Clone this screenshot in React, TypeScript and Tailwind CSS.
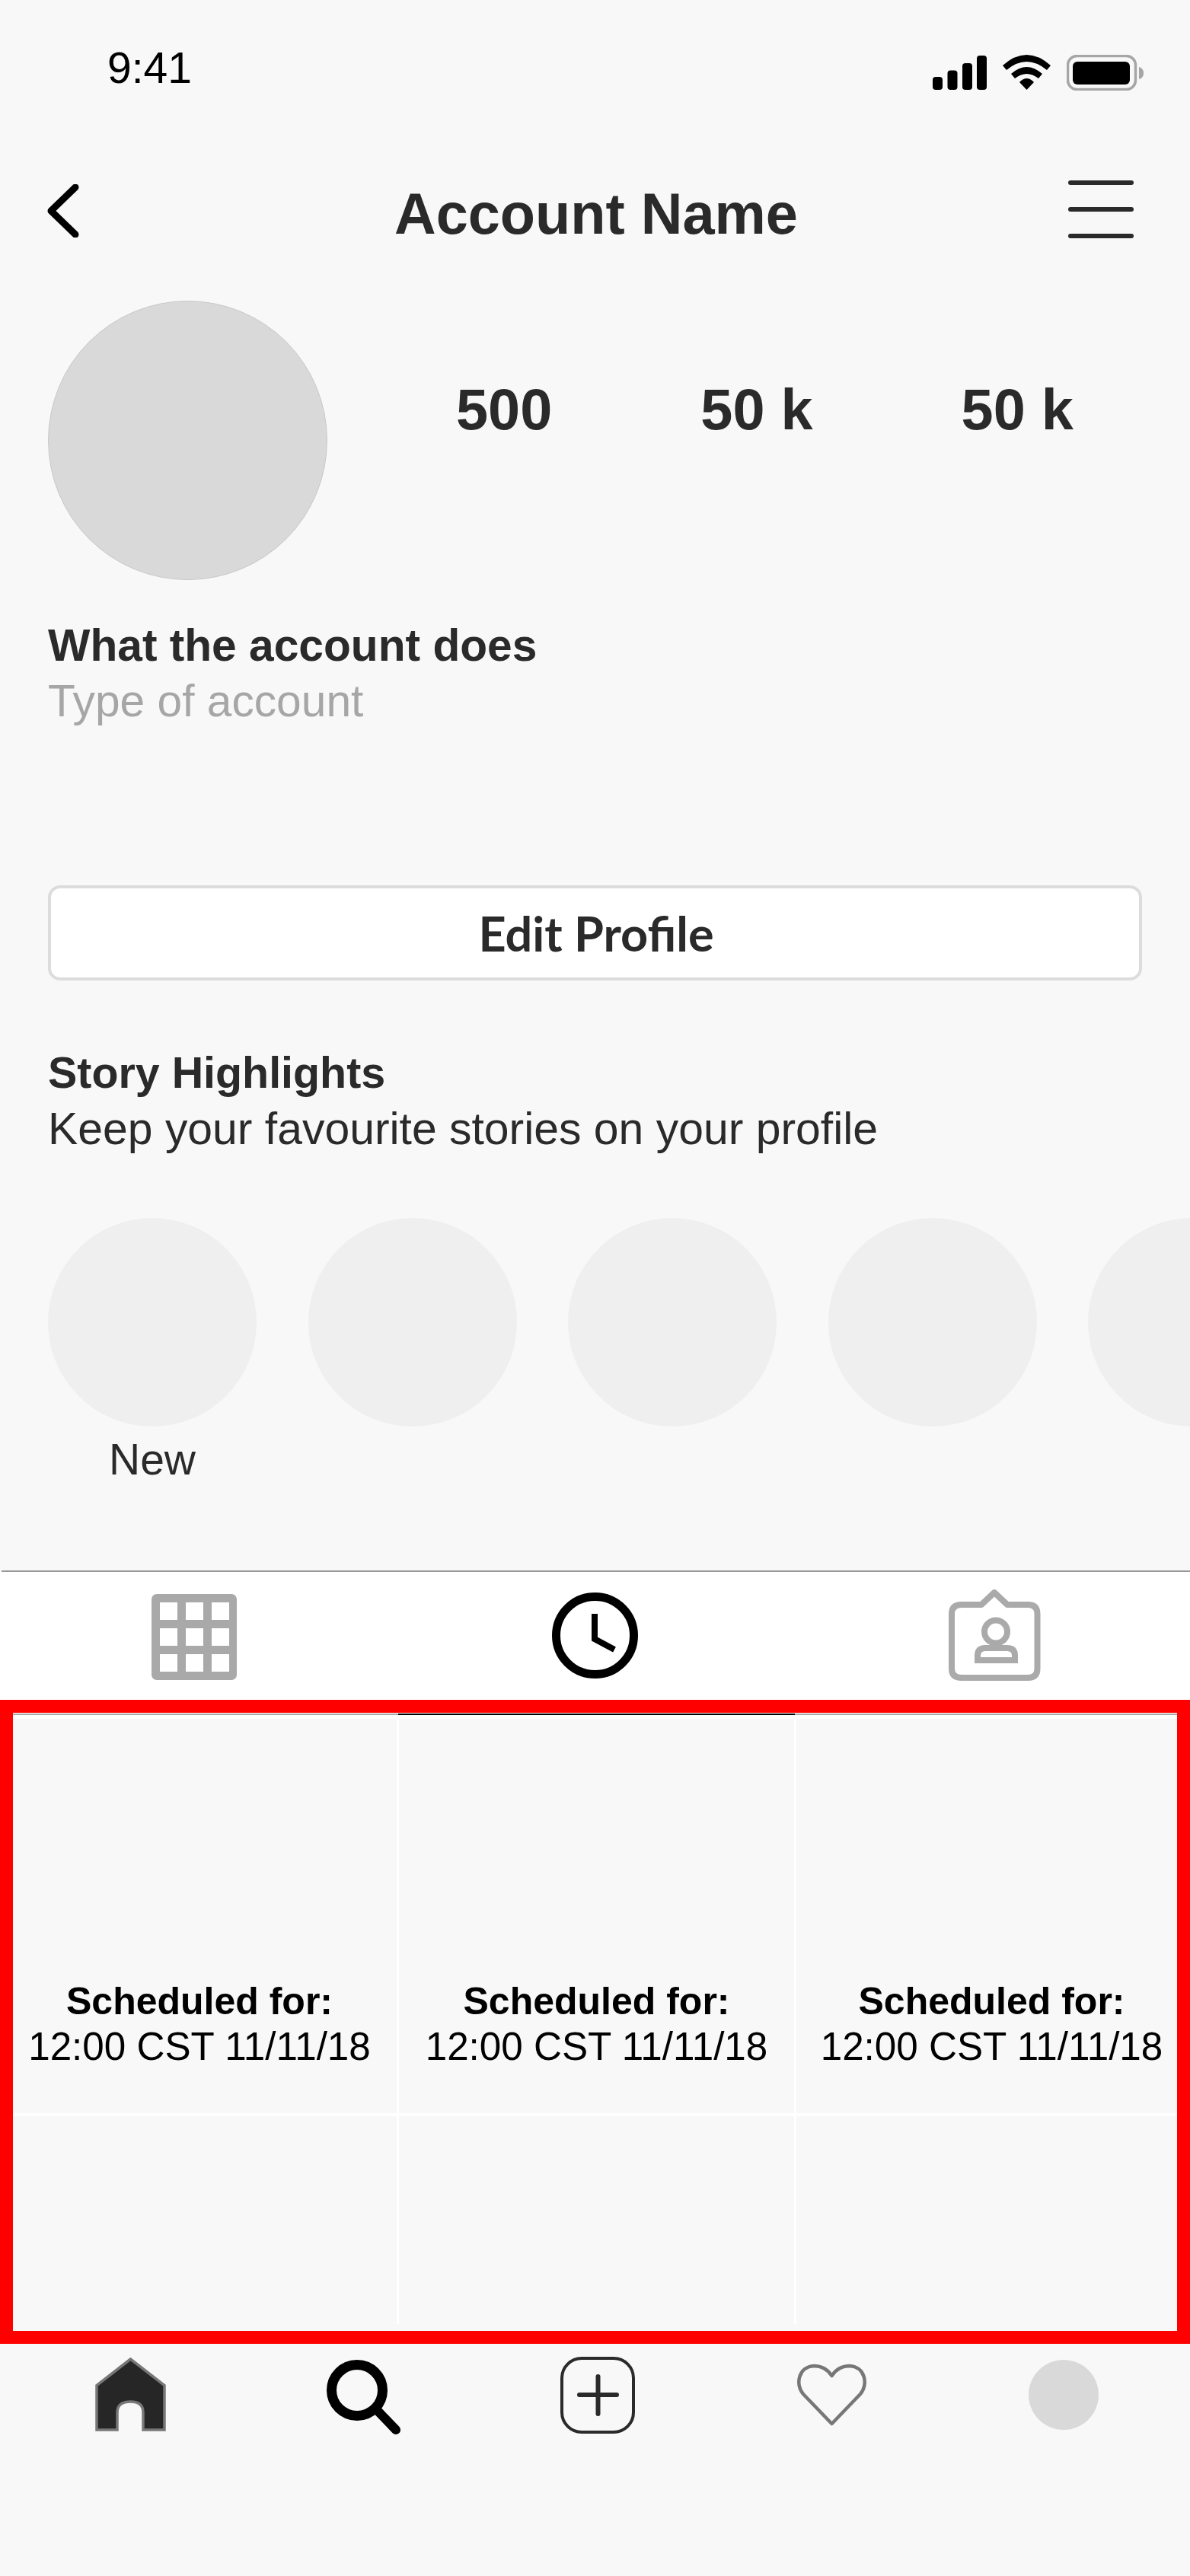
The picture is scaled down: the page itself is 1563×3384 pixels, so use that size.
const sans = "font-['Liberation_Sans',Arial,sans-serif]";

function Tile({ first, className = "" }: { first?: boolean; className?: string }) {
  return (
    <div className={`bg-[#f8f8f8] text-center text-black ${className}`}>
      {first && (
        <div className="pt-[342px]">
          <p className="text-[50px] leading-[59px] font-bold">Scheduled for:</p>
          <p className="text-[51.2px] leading-[59px] whitespace-nowrap">12:00 CST 11/11/18</p>
        </div>
      )}
    </div>
  );
}

export default function App() {
  return (
    <div className={`relative min-h-[3384px] w-full overflow-hidden bg-[#f8f8f8] text-[#2a2a2a] ${sans}`}>
      {/* Status bar */}
      <div className="flex h-[237px] items-start">
        <span className="ml-[141px] mt-[56px] text-[57px] leading-[66px] text-black">9:41</span>
        <div className="ml-auto mr-[61px] mt-[72px] flex items-start gap-[21px]">
          <svg width="71" height="46" viewBox="0 0 71 46" className="mt-px">
            <rect x="0" y="28" width="13" height="17" rx="4" />
            <rect x="19.5" y="19.5" width="13" height="25.5" rx="4" />
            <rect x="39" y="10" width="13" height="35" rx="4" />
            <rect x="58" y="0" width="13" height="45" rx="4" />
          </svg>
          <svg width="63" height="46" viewBox="0 0 63 46">
            <path d="M0 14Q31.5-14 63 14L58 20Q31.5-2 5 20Z" />
            <path d="M11 25Q31.5 7 52 25L47 31Q31.5 19 16 31Z" />
            <path d="M22 36Q31.5 26 41 36L31.5 46Z" />
          </svg>
          <svg width="101" height="47" viewBox="0 0 101 47">
            <rect x="1.5" y="1.5" width="89" height="44" rx="12" fill="none" stroke="#a6a6a6" strokeWidth="3.5" />
            <rect x="8" y="9" width="75" height="30" rx="6" />
            <path d="M95 16C99 17 101 20 101 24C101 28 99 31 95 32Z" fill="#a6a6a6" />
          </svg>
        </div>
      </div>

      {/* Header */}
      <div className="grid h-[158px] grid-cols-3 items-start">
        <svg width="44" height="70" viewBox="0 0 44 70" fill="none" className="ml-[62px] mt-[5px]">
          <path d="M37 4L5 35L37 66" stroke="#000" strokeWidth="9" strokeLinecap="round" strokeLinejoin="round" />
        </svg>
        <h1 className="-ml-[3px] text-left text-[75.7px] leading-[88px] font-bold whitespace-nowrap">Account Name</h1>
        <div className="mr-[74px] flex h-[76px] w-[86px] flex-col justify-between justify-self-end">
          <span className="h-[6px] rounded-full bg-[#2a2a2a]" />
          <span className="h-[6px] rounded-full bg-[#2a2a2a]" />
          <span className="h-[6px] rounded-full bg-[#2a2a2a]" />
        </div>
      </div>

      {/* Profile */}
      <div className="flex h-[367px] items-start">
        <div className="ml-[63px] size-[367px] rounded-full border border-[#c8c8c8] bg-[#d9d9d9]" />
        <div className="mt-[99px] ml-[169px] flex text-[75.7px] leading-[88px] font-bold">
          <span>500</span>
          <span className="ml-[195px]">50 k</span>
          <span className="ml-[195px]">50 k</span>
        </div>
      </div>

      {/* Bio */}
      <div className="mt-[49px] px-[63px] text-[58.7px] leading-[73px]">
        <p className="font-bold">What the account does</p>
        <p className="text-[#a6a6a6]">Type of account</p>
      </div>

      {/* Edit button */}
      <div className="mx-[63px] mt-[206px] flex h-[125px] items-center justify-center rounded-[16px] border-[4px] border-[#dcdcdc] bg-white pt-[2px] pl-[3px] font-['Lato',sans-serif] text-[63px] font-bold">
        Edit Profile
      </div>

      {/* Story highlights */}
      <div className="mt-[85px] px-[63px] leading-[73px]">
        <p className="text-[57.4px] font-bold">Story Highlights</p>
        <p className="text-[58.9px]">Keep your favourite stories on your profile</p>
      </div>
      <div className="mt-[81px] flex gap-[67.5px] pl-[63px]">
        <div className="size-[274px] shrink-0 rounded-full bg-[#efefef]" />
        <div className="size-[274px] shrink-0 rounded-full bg-[#efefef]" />
        <div className="size-[274px] shrink-0 rounded-full bg-[#efefef]" />
        <div className="size-[274px] shrink-0 rounded-full bg-[#efefef]" />
        <div className="size-[274px] shrink-0 rounded-full bg-[#efefef]" />
      </div>
      <p className="mt-[7px] w-[400px] text-center text-[57px] leading-[73px]">New</p>

      {/* Tabs */}
      <div className="mt-[109px] ml-[2px] h-[2px] bg-[#999999]" />
      <div className="flex h-[186px] items-start bg-white">
        <svg width="112" height="113" viewBox="0 0 112 113" className="ml-[199px] mt-[29px]">
          <rect width="112" height="113" rx="7" fill="#a9a9a9" />
          {[11, 45, 79].map((y) =>
            [11, 45, 79].map((x) => <rect key={`${x}-${y}`} x={x} y={y} width="23" height="23" fill="#fff" />),
          )}
        </svg>
        <svg width="113" height="113" viewBox="0 0 113 113" fill="none" className="ml-[414px] mt-[27px]">
          <circle cx="56.5" cy="56.5" r="51" stroke="#000" strokeWidth="11" />
          <path d="M56 28V61L82 75" stroke="#000" strokeWidth="8" />
        </svg>
        <svg width="121" height="121" viewBox="0 0 121 121" fill="none" stroke="#aaaaaa" strokeWidth="8" className="ml-[408px] mt-[23px]">
          <path d="M17 20H43L60 4L77 20H104Q116.500 20 116.500 32V104Q116.500 116 104 116H17Q4 116 4 104V32Q4 20 17 20Z" strokeLinejoin="round" />
          <circle cx="62" cy="55.500" r="15" />
          <path d="M38 93V87Q38 77 48 77H77Q87 77 87 87V93Z" />
        </svg>
      </div>
      <div className="flex h-[2px] bg-[#aaaaaa]">
        <div className="ml-[523px] w-[521px] bg-black" />
      </div>

      {/* Scheduled grid */}
      <div className="grid grid-cols-[521px_519px_1fr] grid-rows-[518px_273px] gap-x-[3px] gap-y-[4px] bg-white pt-[5px]">
        <Tile first className="pl-[3px]" />
        <Tile first />
        <Tile first className="pr-[4px]" />
        <Tile />
        <Tile />
        <Tile />
      </div>

      {/* Bottom nav */}
      <div className="grid grid-cols-5 items-start justify-items-center pl-[18px] pr-[10px]">
        <svg width="93" height="97" viewBox="0 0 93 97" className="mt-[44px]">
          <path d="M46.5 2L2 36.500V95H29V72Q29 58 46.500 58Q63 58 63 72V95H91V36.500Z" fill="#262626" stroke="#777777" strokeWidth="3.500" />
        </svg>
        <svg width="100" height="100" viewBox="0 0 100 100" fill="none" stroke="#000" className="mt-[47px]">
          <circle cx="40" cy="40" r="33.500" strokeWidth="13" />
          <path d="M68 68L91 92" strokeWidth="12" strokeLinecap="round" />
        </svg>
        <svg width="98" height="101" viewBox="0 0 98 101" fill="none" stroke="#2a2a2a" className="mt-[43px] mr-[2px]">
          <rect x="2" y="2" width="94" height="97" rx="26" strokeWidth="4" />
          <path d="M25 50H74M49.500 26V75" strokeWidth="6" strokeLinecap="round" />
        </svg>
        <svg width="91" height="84" viewBox="0 0 91 84" fill="none" className="mt-[51px]">
          <path d="M45.500 80L8 41C-3 28 2 5 22 4C33 4 41 10 45.500 17C50 10 58 4 69 4C89 5 94 28 83 41Z" stroke="#777777" strokeWidth="4.500" strokeLinejoin="round" />
        </svg>
        <div className="mt-[47px] mr-[6px] size-[92px] rounded-full bg-[#d9d9d9]" />
      </div>

      {/* Red annotation frame */}
      <div className="absolute top-[2233px] left-0 h-[846px] w-full border-[17px] border-[#ff0000]" />
    </div>
  );
}
